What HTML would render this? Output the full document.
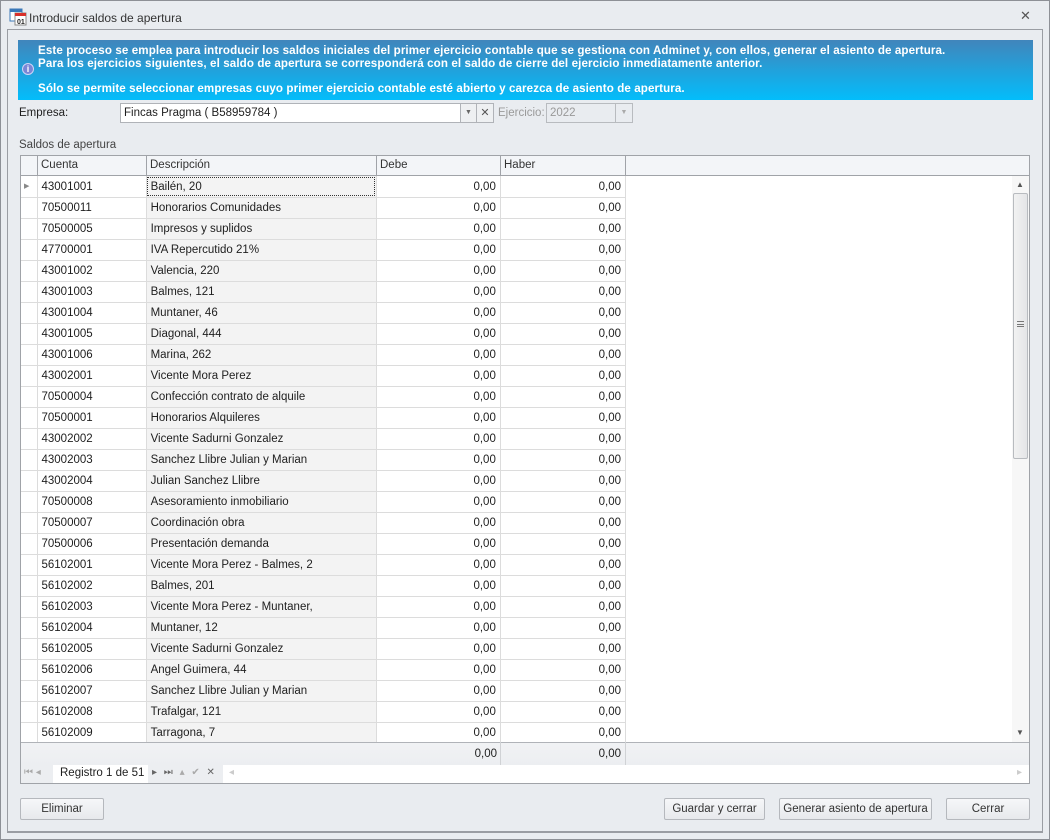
<!DOCTYPE html>
<html><head><meta charset="utf-8"><style>
*{box-sizing:border-box;margin:0;padding:0}
body{width:1050px;height:840px;background:#e9ecf0;font-family:"Liberation Sans","DejaVu Sans",sans-serif;font-size:11px;color:#1e1e1e;position:relative;overflow:hidden}
.abs{position:absolute}
#win{left:0;top:0;width:1050px;height:840px;border:1px solid #8d9096;background:#e9ecf0}
#panel{left:7px;top:29px;width:1036px;height:804px;border:1px solid #9a9da3;border-bottom-width:2px}
#banner{left:18px;top:40px;width:1015px;height:60px;background:linear-gradient(#4185bb,#03bdfb);color:#fff;font-weight:bold;font-size:11.6px;line-height:12.7px;letter-spacing:0.1px}
table{border-collapse:collapse;table-layout:fixed;position:absolute}
td{height:21px;border-right:1px solid #dcdcdc;border-bottom:1px solid #dcdcdc;padding:1px 4px 0;white-space:nowrap;overflow:hidden}
td.n{text-align:right}
td.d{background:#f3f3f3}
.btn{height:22px;border:1px solid #b5b8bd;border-radius:2px;background:linear-gradient(#f6f7f9,#e7e9ec);text-align:center;line-height:20px;font-size:11.5px;color:#333}
</style></head><body>
<div id="win" class="abs"></div>
<svg class="abs" style="left:9px;top:8px" width="18" height="18"><rect x="1" y="1" width="12" height="12" fill="#fff" stroke="#3a78b8"/><rect x="1" y="1" width="12" height="3" fill="#3a78b8"/><rect x="6" y="5" width="11" height="12" fill="#fff" stroke="#888"/><rect x="6" y="5" width="11" height="3" fill="#d9312b"/><text x="8" y="16" font-size="7" font-weight="bold" fill="#222" font-family="Liberation Sans">01</text></svg>
<div class="abs" style="left:29px;top:11px;font-size:12px;color:#333">Introducir saldos de apertura</div>
<div class="abs" style="left:1020px;top:8px;font-size:13px;color:#555">✕</div>
<div id="panel" class="abs"></div>
<div id="banner" class="abs">
<div class="abs" style="left:20px;top:5px">Este proceso se emplea para introducir los saldos iniciales del primer ejercicio contable que se gestiona con Adminet y, con ellos, generar el asiento de apertura.<br>Para los ejercicios siguientes, el saldo de apertura se corresponderá con el saldo de cierre del ejercicio inmediatamente anterior.<br><br>Sólo se permite seleccionar empresas cuyo primer ejercicio contable esté abierto y carezca de asiento de apertura.</div>
<div class="abs" style="left:4px;top:23px;width:12px;height:12px;border-radius:50%;background:#7a86d6;border:1px solid #cfd6f5;color:#fff;font-size:9px;line-height:10px;text-align:center">i</div>
</div>
<div class="abs" style="left:19px;top:107px;font-size:11.5px">Empresa:</div>
<div class="abs" style="left:120px;top:103px;width:341px;height:20px;background:#fff;border:1px solid #b0b3b8;padding:3px 3px;font-size:11.5px">Fincas Pragma ( B58959784 )</div>
<div class="abs" style="left:460px;top:103px;width:17px;height:20px;border:1px solid #b0b3b8;background:#eef0f2;color:#666;font-size:7px;text-align:center;line-height:18px">▼</div>
<div class="abs" style="left:476px;top:103px;width:18px;height:20px;border:1px solid #b0b3b8;background:#eef0f2;color:#555;font-weight:bold;text-align:center;line-height:18px">✕</div>
<div class="abs" style="left:498px;top:107px;color:#9a9a9a;font-size:11.5px">Ejercicio:</div>
<div class="abs" style="left:546px;top:103px;width:70px;height:20px;border:1px solid #b8bbbf;padding:3px 3px;color:#999;font-size:11.5px">2022</div>
<div class="abs" style="left:615px;top:103px;width:18px;height:20px;border:1px solid #b8bbbf;color:#aaa;font-size:7px;text-align:center;line-height:18px">▼</div>
<div class="abs" style="left:19px;top:139px;font-size:11.5px;color:#444">Saldos de apertura</div>
<div class="abs" style="left:20px;top:155px;width:1010px;height:629px;border:1px solid #a0a3a8;background:#fff"></div>
<div class="abs" style="left:21px;top:156px;width:1008px;height:20px;background:#f3f5f8;border-bottom:1px solid #a0a3a8"></div>
<div class="abs" style="left:37px;top:156px;width:1px;height:20px;background:#a0a3a8"></div>
<div class="abs" style="left:146px;top:156px;width:1px;height:20px;background:#a0a3a8"></div>
<div class="abs" style="left:376px;top:156px;width:1px;height:20px;background:#a0a3a8"></div>
<div class="abs" style="left:500px;top:156px;width:1px;height:20px;background:#a0a3a8"></div>
<div class="abs" style="left:625px;top:156px;width:1px;height:20px;background:#a0a3a8"></div>
<div class="abs" style="left:41px;top:159px;font-size:11.5px;color:#333">Cuenta</div>
<div class="abs" style="left:150px;top:159px;font-size:11.5px;color:#333">Descripción</div>
<div class="abs" style="left:380px;top:159px;font-size:11.5px;color:#333">Debe</div>
<div class="abs" style="left:504px;top:159px;font-size:11.5px;color:#333">Haber</div>
<table style="left:21px;top:176px;width:605px;font-size:11.5px">
<colgroup><col style="width:16px"><col style="width:109px"><col style="width:230px"><col style="width:124px"><col style="width:125px"></colgroup>
<tr><td style="color:#888;font-size:7px;padding:0 3px">▶</td><td>43001001</td><td class="d" style="outline:1px dotted #333;outline-offset:-2px">Bailén, 20</td><td class="n">0,00</td><td class="n">0,00</td></tr>
<tr><td></td><td>70500011</td><td class="d">Honorarios Comunidades</td><td class="n">0,00</td><td class="n">0,00</td></tr>
<tr><td></td><td>70500005</td><td class="d">Impresos y suplidos</td><td class="n">0,00</td><td class="n">0,00</td></tr>
<tr><td></td><td>47700001</td><td class="d">IVA Repercutido 21%</td><td class="n">0,00</td><td class="n">0,00</td></tr>
<tr><td></td><td>43001002</td><td class="d">Valencia, 220</td><td class="n">0,00</td><td class="n">0,00</td></tr>
<tr><td></td><td>43001003</td><td class="d">Balmes, 121</td><td class="n">0,00</td><td class="n">0,00</td></tr>
<tr><td></td><td>43001004</td><td class="d">Muntaner, 46</td><td class="n">0,00</td><td class="n">0,00</td></tr>
<tr><td></td><td>43001005</td><td class="d">Diagonal, 444</td><td class="n">0,00</td><td class="n">0,00</td></tr>
<tr><td></td><td>43001006</td><td class="d">Marina, 262</td><td class="n">0,00</td><td class="n">0,00</td></tr>
<tr><td></td><td>43002001</td><td class="d">Vicente Mora Perez</td><td class="n">0,00</td><td class="n">0,00</td></tr>
<tr><td></td><td>70500004</td><td class="d">Confección contrato de alquile</td><td class="n">0,00</td><td class="n">0,00</td></tr>
<tr><td></td><td>70500001</td><td class="d">Honorarios Alquileres</td><td class="n">0,00</td><td class="n">0,00</td></tr>
<tr><td></td><td>43002002</td><td class="d">Vicente Sadurni Gonzalez</td><td class="n">0,00</td><td class="n">0,00</td></tr>
<tr><td></td><td>43002003</td><td class="d">Sanchez Llibre Julian y Marian</td><td class="n">0,00</td><td class="n">0,00</td></tr>
<tr><td></td><td>43002004</td><td class="d">Julian Sanchez Llibre</td><td class="n">0,00</td><td class="n">0,00</td></tr>
<tr><td></td><td>70500008</td><td class="d">Asesoramiento inmobiliario</td><td class="n">0,00</td><td class="n">0,00</td></tr>
<tr><td></td><td>70500007</td><td class="d">Coordinación obra</td><td class="n">0,00</td><td class="n">0,00</td></tr>
<tr><td></td><td>70500006</td><td class="d">Presentación demanda</td><td class="n">0,00</td><td class="n">0,00</td></tr>
<tr><td></td><td>56102001</td><td class="d">Vicente Mora Perez - Balmes, 2</td><td class="n">0,00</td><td class="n">0,00</td></tr>
<tr><td></td><td>56102002</td><td class="d">Balmes, 201</td><td class="n">0,00</td><td class="n">0,00</td></tr>
<tr><td></td><td>56102003</td><td class="d">Vicente Mora Perez - Muntaner,</td><td class="n">0,00</td><td class="n">0,00</td></tr>
<tr><td></td><td>56102004</td><td class="d">Muntaner, 12</td><td class="n">0,00</td><td class="n">0,00</td></tr>
<tr><td></td><td>56102005</td><td class="d">Vicente Sadurni Gonzalez</td><td class="n">0,00</td><td class="n">0,00</td></tr>
<tr><td></td><td>56102006</td><td class="d">Angel Guimera, 44</td><td class="n">0,00</td><td class="n">0,00</td></tr>
<tr><td></td><td>56102007</td><td class="d">Sanchez Llibre Julian y Marian</td><td class="n">0,00</td><td class="n">0,00</td></tr>
<tr><td></td><td>56102008</td><td class="d">Trafalgar, 121</td><td class="n">0,00</td><td class="n">0,00</td></tr>
<tr><td></td><td>56102009</td><td class="d">Tarragona, 7</td><td class="n">0,00</td><td class="n">0,00</td></tr>
</table>
<div class="abs" style="left:1012px;top:176px;width:17px;height:566px;background:#f7f7f7"></div>
<div class="abs" style="left:1016px;top:180px;font-size:8px;color:#555">▲</div>
<div class="abs" style="left:1016px;top:728px;font-size:8px;color:#555">▼</div>
<div class="abs" style="left:1013px;top:193px;width:15px;height:266px;border:1px solid #b8bbbf;border-radius:2px;background:linear-gradient(90deg,#f2f2f2,#e4e5e7)"></div>
<div class="abs" style="left:1017px;top:321px;width:7px;height:6px;border-top:1px solid #777;border-bottom:1px solid #777"><div style="margin-top:2px;height:1px;background:#777"></div></div>
<div class="abs" style="left:21px;top:742px;width:1008px;height:23px;background:linear-gradient(#f1f2f4,#eceef1);border-top:1px solid #b0b3b8"></div>
<div class="abs" style="left:500px;top:742px;width:1px;height:23px;background:#d0d2d5"></div>
<div class="abs" style="left:625px;top:742px;width:1px;height:23px;background:#d0d2d5"></div>
<div class="abs" style="left:380px;top:748px;width:117px;text-align:right;font-size:11.5px">0,00</div>
<div class="abs" style="left:504px;top:748px;width:117px;text-align:right;font-size:11.5px">0,00</div>
<div class="abs" style="left:21px;top:765px;width:1008px;height:18px;background:#fff"></div>
<div class="abs" style="left:21px;top:765px;width:32px;height:18px;background:#eceef1"></div>
<div class="abs" style="left:148px;top:765px;width:75px;height:18px;background:#eceef1"></div>
<div class="abs" style="left:24px;top:767px;font-size:10px;color:#aaa">⏮ ◂</div>
<div class="abs" style="left:60px;top:767px;font-size:11.5px">Registro 1 de 51</div>
<div class="abs" style="left:152px;top:767px;font-size:10px;color:#666;letter-spacing:2px">▸ ⏭ <span style="color:#aaa">▴ ✔</span> ✕</div>
<div class="abs" style="left:229px;top:767px;font-size:10px;color:#ccc">◂</div>
<div class="abs" style="left:1017px;top:767px;font-size:10px;color:#ccc">▸</div>
<div class="btn abs" style="left:20px;top:798px;width:84px">Eliminar</div>
<div class="btn abs" style="left:664px;top:798px;width:101px">Guardar y cerrar</div>
<div class="btn abs" style="left:779px;top:798px;width:153px">Generar asiento de apertura</div>
<div class="btn abs" style="left:946px;top:798px;width:84px">Cerrar</div>
</body></html>
